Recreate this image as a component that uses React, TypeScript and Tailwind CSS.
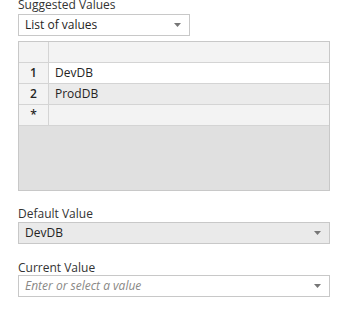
import React from "react";

const font = { fontFamily: '"Segoe UI", "Open Sans", "Noto Sans", sans-serif' };

function Caret() {
  return (
    <svg width="7" height="4" viewBox="0 0 7 4" className="shrink-0">
      <path d="M0 0h7L3.5 4z" fill="#767676" />
    </svg>
  );
}

function Select({
  value,
  placeholder,
  className,
}: {
  value?: string;
  placeholder?: string;
  className: string;
}) {
  return (
    <div
      className={`flex h-[22px] items-center justify-between border border-[#c8c8c8] pl-[6px] pr-[8px] ${className}`}
    >
      {value ? (
        <span className="text-[12px] leading-none text-[#252423]">{value}</span>
      ) : (
        <span className="text-[12px] italic leading-none text-[#8a8886]">
          {placeholder}
        </span>
      )}
      <Caret />
    </div>
  );
}

const rows = [
  { n: "1", v: "DevDB", bg: "bg-white" },
  { n: "2", v: "ProdDB", bg: "bg-[#ebebeb]" },
  { n: "*", v: "", bg: "bg-[#f3f3f3]" },
];

export default function App() {
  return (
    <div className="h-[310px] w-[347px] overflow-hidden bg-white pl-[18px]" style={font}>
      <div className="-mt-[3px] text-[12px] leading-[15px] text-[#333]">Suggested Values</div>
      <Select value="List of values" className="mt-[2px] w-[172px] bg-white" />

      <div className="mt-[5px] flex h-[150px] w-[312px] flex-col border border-[#c8c8c8] bg-[#e0e0e0]">
        <div className="flex h-[21px] border-b border-[#d4d4d4] bg-[#f3f3f3]">
          <div className="w-[30px] border-r border-[#d4d4d4]" />
          <div className="flex-1" />
        </div>
        {rows.map((r) => (
          <div key={r.n} className={`flex h-[21px] border-b border-[#d4d4d4] ${r.bg}`}>
            <div className="flex w-[30px] items-center justify-center border-r border-[#d4d4d4] bg-[#f3f3f3] text-[12px] font-semibold text-[#252423]">
              {r.n}
            </div>
            <div className="flex flex-1 items-center pl-[6px] text-[12px] text-[#252423]">
              {r.v}
            </div>
          </div>
        ))}
      </div>

      <div className="mt-[15px] text-[12px] leading-[15px] text-[#333]">Default Value</div>
      <Select value="DevDB" className="mt-px w-[312px] bg-[#eaeaea]" />

      <div className="mt-[16px] text-[12px] leading-[15px] text-[#333]">Current Value</div>
      <Select placeholder="Enter or select a value" className="mt-0 w-[312px] bg-white" />
    </div>
  );
}
